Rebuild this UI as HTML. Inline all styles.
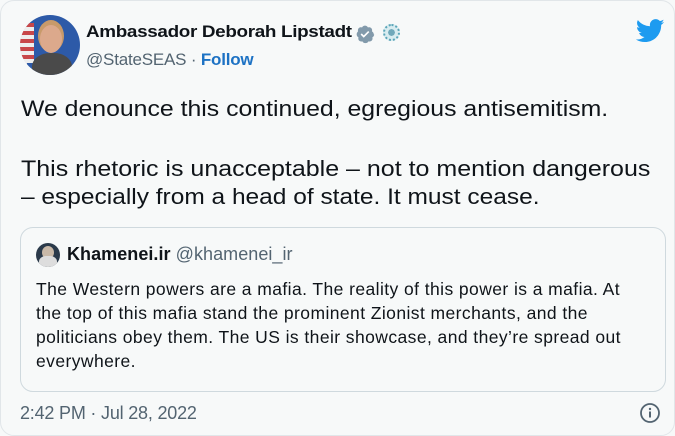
<!DOCTYPE html>
<html><head><meta charset="utf-8"><style>
body{margin:0;width:675px;height:436px;background:#f7f9f9;font-family:"Liberation Sans",sans-serif;color:#0f1419;position:relative;overflow:hidden}
.a{position:absolute;white-space:nowrap}
.l{position:absolute;left:21px;font-size:22px;white-space:nowrap;transform-origin:0 0;color:#0f1419}
</style></head><body>
<div style="position:absolute;left:0;top:0;width:675px;height:436px;border:1px solid #e1e6e9;border-radius:14px;box-sizing:border-box"></div>
<div class="a" style="left:20px;top:15px;width:60px;height:60px;border-radius:50%;overflow:hidden;background:linear-gradient(90deg,#c9c9d6 0 12%,#2d5aa8 12%)">
<div style="position:absolute;left:0;top:8px;width:14px;height:40px;background:repeating-linear-gradient(180deg,#c8474a 0 4px,#eee 4px 8px)"></div>
<div style="position:absolute;left:12px;top:38px;width:40px;height:30px;border-radius:45% 45% 0 0;background:#4a4a4a"></div>
<div style="position:absolute;left:20px;top:10px;width:22px;height:28px;border-radius:50%;background:#dca98c;box-shadow:0 -3px 0 2px #c89a6a"></div>
</div>
<div class="a" style="left:86px;top:22px;font-size:17px;font-weight:bold;letter-spacing:-0.3px;transform:scaleX(1.11);transform-origin:0 0">Ambassador Deborah Lipstadt</div>
<svg class="a" style="left:355px;top:24px" width="20" height="20" viewBox="0 0 24 24"><path fill="#829aab" d="M22.5 12.5c0-1.58-.88-2.950-2.160-3.6.46-1.4.2-2.93-.8-3.920s-2.53-1.26-3.930-.8C14.95 2.88 13.58 2 12 2s-2.95.88-3.6 2.18c-1.4-.46-2.93-.2-3.92.8s-1.26 2.53-.8 3.920C2.880 9.55 2 10.92 2 12.5s.88 2.95 2.18 3.6c-.46 1.4-.2 2.93.8 3.92s2.53 1.26 3.92.8C9.55 22.12 10.92 23 12.5 23s2.95-.88 3.6-2.18c1.4.46 2.93.2 3.920-.8s1.26-2.53.8-3.92c1.3-.65 2.18-2.02 2.18-3.6z"/><path fill="#fff" d="M10.5 16.5l-3.8-3.8 1.4-1.4 2.4 2.4 5.3-5.3 1.4 1.4z"/></svg>
<div class="a" style="left:383px;top:24px;width:17px;height:17px;border-radius:50%;border:2px dotted #5aa5b8;box-sizing:border-box;background:radial-gradient(circle,#6fa8ba 35%,#d8ecf0 38%)"></div>
<div class="a" style="left:86px;top:50px;font-size:17px;color:#536471;letter-spacing:-0.2px">@StateSEAS · <span style="color:#1d72c4;font-weight:bold">Follow</span></div>
<svg class="a" style="left:636px;top:19px" width="29" height="24" viewBox="0 0 24 20"><path fill="#1d9bf0" d="M23.6 2.4c-.9.4-1.8.6-2.8.8 1-.6 1.8-1.6 2.1-2.7-.9.6-2 1-3.1 1.2C19 .7 17.7.1 16.3.1c-2.7 0-4.8 2.2-4.8 4.8 0 .4 0 .8.1 1.1C7.5 5.8 3.9 3.9 1.5.9c-.4.7-.7 1.6-.7 2.4 0 1.7.9 3.2 2.2 4-.8 0-1.500-.2-2.200-.6v.1c0 2.3 1.700 4.3 3.900 4.7-.4.1-.8.2-1.3.2-.3 0-.6 0-.9-.1.6 1.9 2.4 3.3 4.5 3.4-1.7 1.3-3.7 2.1-6 2.1-.4 0-.8 0-1.2-.1 2.1 1.4 4.7 2.2 7.4 2.2 8.9 0 13.7-7.4 13.7-13.700v-.6c1-.7 1.8-1.5 2.5-2.5z"/></svg>
<div class="l" style="top:96px;transform:scaleX(1.128)">We denounce this continued, egregious antisemitism.</div>
<div class="l" style="top:156px;transform:scaleX(1.136)">This rhetoric is unacceptable – not to mention dangerous</div>
<div class="l" style="top:184px;transform:scaleX(1.113)">– especially from a head of state. It must cease.</div>
<div class="a" style="left:20px;top:227px;width:646px;height:165px;border:1px solid #cfd9de;border-radius:13px;box-sizing:border-box"></div>
<div class="a" style="left:36px;top:243px;width:24px;height:24px;border-radius:50%;overflow:hidden;background:#2b3a4a">
<div style="position:absolute;left:6px;top:3px;width:12px;height:13px;border-radius:50%;background:#c9b9a8"></div>
<div style="position:absolute;left:3px;top:13px;width:18px;height:14px;border-radius:40%;background:#ddd"></div></div>
<div class="a" style="left:67px;top:244px;font-size:18px;letter-spacing:0.05px"><b>Khamenei.ir</b> <span style="color:#536471">@khamenei_ir</span></div>
<div class="a" style="left:36px;top:277px;font-size:17.5px;line-height:24px;letter-spacing:0.42px">The Western powers are a mafia. The reality of this power is a mafia. At<br>the top of this mafia stand the prominent Zionist merchants, and the<br>politicians obey them. The US is their showcase, and they’re spread out<br>everywhere.</div>
<div class="a" style="left:20px;top:403px;font-size:18px;color:#536471;letter-spacing:-0.2px">2:42 PM · Jul 28, 2022</div>
<svg class="a" style="left:639px;top:402px" width="22" height="22" viewBox="0 0 22 22"><circle cx="11" cy="11" r="9" fill="none" stroke="#536471" stroke-width="1.8"/><rect x="10" y="9.5" width="2" height="6" fill="#536471"/><circle cx="11" cy="7" r="1.2" fill="#536471"/></svg>
</body></html>
